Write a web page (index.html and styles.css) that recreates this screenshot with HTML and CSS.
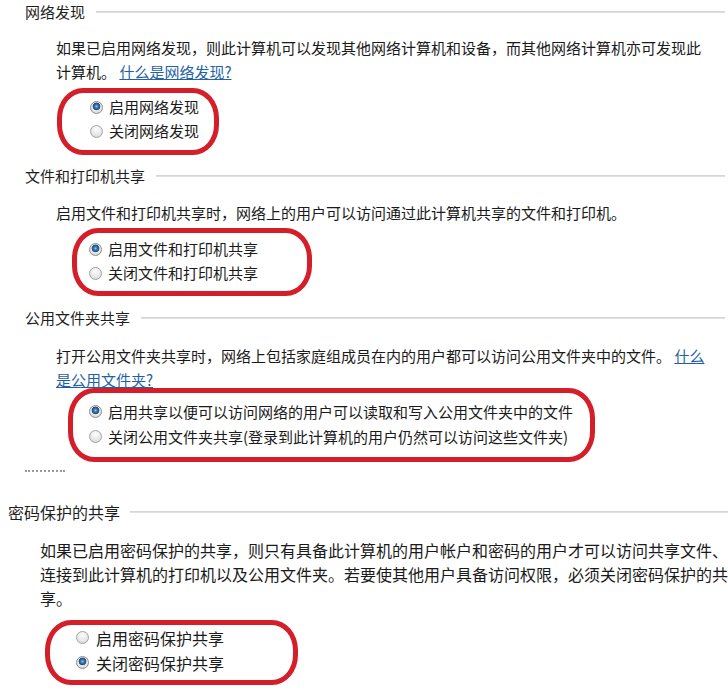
FILE: index.html
```html
<!DOCTYPE html>
<html lang="zh-CN">
<head>
  <meta charset="UTF-8">
  <title>高级共享设置</title>
  <link rel="stylesheet" href="styles.css">
</head>
<body>
  <section class="group group-net">
    <div class="group-head"><span>网络发现</span><i class="rule"></i></div>
    <p class="desc">如果已启用网络发现，则此计算机可以发现其他网络计算机和设备，而其他网络计算机亦可发现此<br>计算机。 <a href="#">什么是网络发现?</a></p>
    <div class="choices choices-net">
      <label class="choice"><input type="radio" name="net" checked>启用网络发现</label>
      <label class="choice"><input type="radio" name="net">关闭网络发现</label>
    </div>
  </section>

  <section class="group group-files">
    <div class="group-head"><span>文件和打印机共享</span><i class="rule"></i></div>
    <p class="desc">启用文件和打印机共享时，网络上的用户可以访问通过此计算机共享的文件和打印机。</p>
    <div class="choices choices-files">
      <label class="choice"><input type="radio" name="files" checked>启用文件和打印机共享</label>
      <label class="choice"><input type="radio" name="files">关闭文件和打印机共享</label>
    </div>
  </section>

  <section class="group group-public">
    <div class="group-head"><span>公用文件夹共享</span><i class="rule"></i></div>
    <p class="desc">打开公用文件夹共享时，网络上包括家庭组成员在内的用户都可以访问公用文件夹中的文件。 <a href="#">什么<br>是公用文件夹?</a></p>
    <div class="choices choices-public">
      <label class="choice"><input type="radio" name="public" checked>启用共享以便可以访问网络的用户可以读取和写入公用文件夹中的文件</label>
      <label class="choice"><input type="radio" name="public">关闭公用文件夹共享(登录到此计算机的用户仍然可以访问这些文件夹)</label>
    </div>
    <div class="stray"></div>
  </section>

  <section class="group group-password">
    <div class="group-head"><span>密码保护的共享</span><i class="rule"></i></div>
    <p class="desc">如果已启用密码保护的共享，则只有具备此计算机的用户帐户和密码的用户才可以访问共享文件、<br>连接到此计算机的打印机以及公用文件夹。若要使其他用户具备访问权限，必须关闭密码保护的共<br>享。</p>
    <div class="choices choices-password">
      <label class="choice"><input type="radio" name="password">启用密码保护共享</label>
      <label class="choice"><input type="radio" name="password" checked>关闭密码保护共享</label>
    </div>
  </section>
</body>
</html>
```

FILE: styles.css
```css
/* Base */
* { box-sizing: border-box; }
html, body { margin: 0; padding: 0; }

body {
  background: #fff;
  color: #1a1a1a;
  font-family: "Noto Sans CJK SC", "Noto Sans", sans-serif;
  font-size: 15px;
  line-height: 24px;
  width: 728px;
}

/* Group header with rule */
.group { padding: 0 3px 0 25px; }

.group-head {
  display: flex;
  align-items: center;
  gap: 11px;
  height: 24px;
  color: #1e1e1e;
}

.group-head .rule {
  flex: 1;
  height: 2px;
  background: linear-gradient(#d0d0d0, #e6e6e6);
}

.desc { margin: 12px 0 4px 31px; }

.desc a { color: #1f63a6; text-decoration: underline; }

/* Hand-drawn red marks around the options */
.choices {
  display: flex;
  flex-direction: column;
  width: max-content;
  border: 5px solid #d41f2b;
  border-radius: 26px / 30px;
}

.choice {
  display: flex;
  align-items: center;
  height: 24px;
  cursor: default;
}

/* Windows 7 style radio */
.choice input {
  appearance: none;
  -webkit-appearance: none;
  width: 13px;
  height: 13px;
  margin: 0 6px 0 0;
  border-radius: 50%;
  border: 1px solid #a3a3a3;
  background: radial-gradient(circle at 50% 30%, #fdfdfd 0, #e6e6e6 60%, #cfcfcf 100%);
  flex: none;
}

.choice input:checked {
  border-color: #8c8c8c;
  background:
    radial-gradient(circle at 50% 40%, #9cc8ea 0, #3c7db5 1.5px, #1d4d7c 3.5px, rgba(29,77,124,0) 4.2px),
    radial-gradient(circle at 50% 30%, #fdfdfd 0, #e2e2e2 70%, #c9c9c9 100%);
}

/* Section 1 */
.choices-net { margin-left: 32px; padding: 2px 15px 7px 28px; }

/* Section 2 */
.group-files { margin-top: 9px; }
.group-files .desc { margin-top: 13px; margin-bottom: 3px; }
.choices-files { margin-left: 47px; padding: 4px 49px 6px 12px; }

/* Section 3 */
.group-public { margin-top: 10px; }
.group-public .desc { margin-top: 14px; margin-bottom: -4px; }
.choices-public { margin-left: 43px; padding: 6px 17px 8px 16px; }
.choices-public .choice { height: 25px; }

.stray {
  width: 40px;
  margin-top: 8px;
  border-top: 2px dotted #9a9a9a;
}

/* Section 4 */
.group-password {
  margin-top: 28px;
  padding: 0 0 0 8px;
  font-size: 16px;
}
.group-password .group-head { gap: 10px; }
.group-password .desc { margin: 14px 0 10px 32px; }
.choices-password { margin-left: 37px; padding: 0 69px 5px 26px; }
.choices-password .choice { height: 25px; }
.choices-password .choice input { margin-right: 7px; }
```
